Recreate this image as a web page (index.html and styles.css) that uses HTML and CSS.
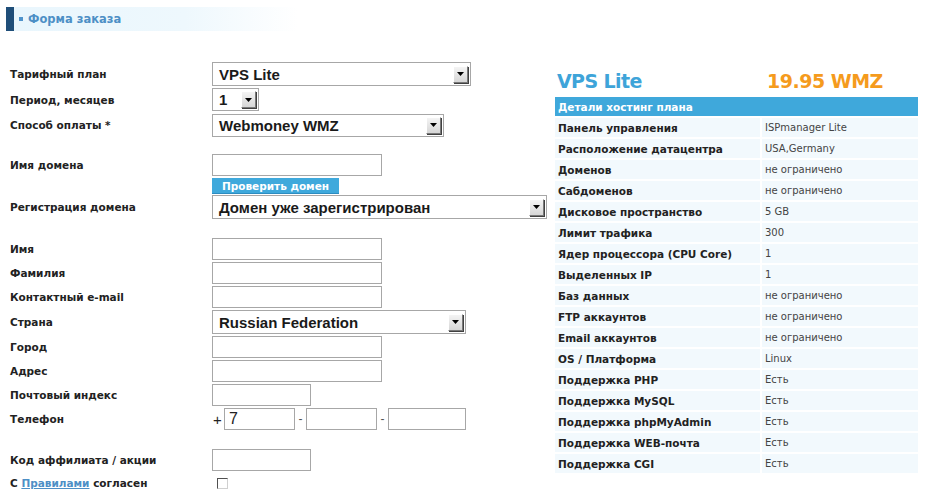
FILE: index.html
```html
<!DOCTYPE html>
<html lang="ru">
<head>
<meta charset="utf-8">
<title>Форма заказа</title>
<link rel="stylesheet" href="styles.css">
</head>
<body>
<div class="title-bar"><span class="bullet"></span><span class="title">Форма заказа</span></div>
<div class="content">
  <form class="form">
    <div class="row r26"><span class="lbl">Тарифный план</span>
      <div class="select w259"><span class="val">VPS Lite</span><span class="dd"><svg width="7" height="4" viewBox="0 0 7 4"><path d="M0 0H7L3.5 4Z" fill="#000"/></svg></span></div></div>
    <div class="row r25"><span class="lbl">Период, месяцев</span>
      <div class="select w47 h23"><span class="val">1</span><span class="dd"><svg width="7" height="4" viewBox="0 0 7 4"><path d="M0 0H7L3.5 4Z" fill="#000"/></svg></span></div></div>
    <div class="row r26"><span class="lbl">Способ оплаты *</span>
      <div class="select w232 h23"><span class="val">Webmoney WMZ</span><span class="dd"><svg width="7" height="4" viewBox="0 0 7 4"><path d="M0 0H7L3.5 4Z" fill="#000"/></svg></span></div></div>
    <div class="row r24 mt15"><span class="lbl">Имя домена</span><span class="input w170"></span></div>
    <div class="row r16 mt1"><span class="lbl"></span><span class="btn">Проверить домен</span></div>
    <div class="row r26"><span class="lbl">Регистрация домена</span>
      <div class="select w335"><span class="val">Домен уже зарегистрирован</span><span class="dd"><svg width="7" height="4" viewBox="0 0 7 4"><path d="M0 0H7L3.5 4Z" fill="#000"/></svg></span></div></div>
    <div class="row r24 mt17"><span class="lbl">Имя</span><span class="input w170"></span></div>
    <div class="row r24"><span class="lbl">Фамилия</span><span class="input w170"></span></div>
    <div class="row r24"><span class="lbl">Контактный e-mail</span><span class="input w170"></span></div>
    <div class="row r26"><span class="lbl">Страна</span>
      <div class="select w254"><span class="val">Russian Federation</span><span class="dd"><svg width="7" height="4" viewBox="0 0 7 4"><path d="M0 0H7L3.5 4Z" fill="#000"/></svg></span></div></div>
    <div class="row r24"><span class="lbl">Город</span><span class="input w170"></span></div>
    <div class="row r24"><span class="lbl">Адрес</span><span class="input w170"></span></div>
    <div class="row r24"><span class="lbl">Почтовый индекс</span><span class="input w99"></span></div>
    <div class="row r24"><span class="lbl">Телефон</span><span class="sep plus">+</span><span class="input w71"><span class="ival">7</span></span><span class="sep">-</span><span class="input w71"></span><span class="sep">-</span><span class="input w78"></span></div>
    <div class="row r24 mt17"><span class="lbl">Код аффилиата / акции</span><span class="input w99"></span></div>
    <div class="row r18 mt2"><span class="lbl">С <a href="#" class="link">Правилами</a> согласен</span><span class="check"></span></div>
  </form>
  <div class="plan">
    <div class="plan-head"><span class="plan-name">VPS Lite</span><span class="plan-price">19.95 WMZ</span></div>
    <table class="details">
      <tr><th colspan="2">Детали хостинг плана</th></tr>
      <tr><td class="k">Панель управления</td><td class="v">ISPmanager Lite</td></tr>
      <tr><td class="k">Расположение датацентра</td><td class="v">USA,Germany</td></tr>
      <tr><td class="k">Доменов</td><td class="v">не ограничено</td></tr>
      <tr><td class="k">Сабдоменов</td><td class="v">не ограничено</td></tr>
      <tr><td class="k">Дисковое пространство</td><td class="v">5 GB</td></tr>
      <tr><td class="k">Лимит трафика</td><td class="v">300</td></tr>
      <tr><td class="k">Ядер процессора (CPU Core)</td><td class="v">1</td></tr>
      <tr><td class="k">Выделенных IP</td><td class="v">1</td></tr>
      <tr><td class="k">Баз данных</td><td class="v">не ограничено</td></tr>
      <tr><td class="k">FTP аккаунтов</td><td class="v">не ограничено</td></tr>
      <tr><td class="k">Email аккаунтов</td><td class="v">не ограничено</td></tr>
      <tr><td class="k">OS / Платформа</td><td class="v">Linux</td></tr>
      <tr><td class="k">Поддержка PHP</td><td class="v">Есть</td></tr>
      <tr><td class="k">Поддержка MySQL</td><td class="v">Есть</td></tr>
      <tr><td class="k">Поддержка phpMyAdmin</td><td class="v">Есть</td></tr>
      <tr><td class="k">Поддержка WEB-почта</td><td class="v">Есть</td></tr>
      <tr><td class="k">Поддержка CGI</td><td class="v">Есть</td></tr>
    </table>
  </div>
</div>
</body>
</html>
```
FILE: styles.css
```css
html, body { margin: 0; padding: 0; background: #fff; }
body { font-family: "DejaVu Sans", Verdana, sans-serif; color: #222; }

.title-bar {
  margin: 7px 0 0 6px;
  width: 284px;
  height: 24px;
  border-left: 8px solid #1f4e79;
  background: linear-gradient(to right, #e9f6fd 0%, #eef8fd 60%, #ffffff 100%);
  display: flex;
  align-items: center;
}
.bullet { width: 4px; height: 4px; background: #4f93cb; margin: 0 5px 0 5px; }
.title { font-weight: bold; font-size: 11.5px; color: #4d8fc6; }

.content { display: flex; padding-left: 10px; margin-top: 30px; }

.form { width: 543px; flex: none; display: flex; flex-direction: column; }
.row { display: flex; align-items: center; }
.r26 { height: 26px; }
.r25 { height: 25px; }
.r24 { height: 24px; }
.r18 { height: 18px; }
.r16 { height: 16px; }
.mt15 { margin-top: 15px; }
.mt17 { margin-top: 17px; }
.mt1 { margin-top: 1px; }
.mt2 { margin-top: 2px; }

.lbl { width: 202px; flex: none; font-weight: bold; font-size: 10.5px; color: #222; }
.link { color: #4d8fc6; text-decoration: underline; }

.select {
  box-sizing: border-box;
  height: 24px;
  border: 1px solid #a7a7a7;
  display: flex;
  align-items: center;
  justify-content: space-between;
  padding: 0 2px 0 6px;
  background: #fff;
}
.select.h23 { height: 23px; }
.val { font-family: "Liberation Sans", Arial, sans-serif; font-weight: bold; font-size: 15px; color: #1a1a1a; white-space: nowrap; }
.dd {
  box-sizing: border-box;
  width: 15px;
  height: 17px;
  display: flex;
  align-items: center;
  justify-content: center;
  background: linear-gradient(#f4f4f4, #d6d6d6);
  border: 1px solid;
  border-color: #fff #7a7a7a #7a7a7a #fff;
  box-shadow: 1px 1px 0 #404040;
}
.w259 { width: 259px; }
.w47 { width: 47px; }
.w232 { width: 232px; }
.w335 { width: 335px; }
.w254 { width: 254px; }

.input {
  box-sizing: border-box;
  height: 22px;
  border: 1px solid #a7a7a7;
  background: #fff;
  display: flex;
  align-items: center;
  padding-left: 4px;
}
.w170 { width: 170px; }
.w99 { width: 99px; }
.w71 { width: 71px; }
.w78 { width: 78px; }
.ival { font-family: "Liberation Sans", Arial, sans-serif; font-size: 16px; color: #222; }
.sep { width: 11px; text-align: center; font-family: "Liberation Sans", Arial, sans-serif; font-size: 12px; color: #555; }
.sep.plus { width: 12px; text-align: left; padding-left: 1px; box-sizing: border-box; font-size: 15px; color: #222; }

.btn {
  box-sizing: border-box;
  width: 127px;
  height: 16px;
  background: #3fa9dc;
  color: #fff;
  font-weight: bold;
  font-size: 10.5px;
  display: flex;
  align-items: center;
  justify-content: center;
  border-bottom: 1px solid #2c8cc0;
}

.check {
  box-sizing: border-box;
  width: 11px;
  height: 11px;
  margin-left: 5px;
  border: 1px solid;
  border-color: #505050 #d0d0d0 #d0d0d0 #505050;
  background: #fff;
}

.plan { width: 367px; flex: none; }
.plan-head { display: flex; padding: 8px 0 0 4px; height: 24px; align-items: center; }
.plan-name { width: 210px; font-weight: bold; font-size: 19px; letter-spacing: -0.6px; color: #3ea4d9; }
.plan-price { font-weight: bold; font-size: 19px; letter-spacing: -0.5px; color: #f59b1d; }

.details { margin-top: 2px; width: 367px; border-collapse: separate; border-spacing: 2px; }
.details th {
  height: 19px; padding: 0 3px; text-align: left;
  background: #3fa8db; color: #fff; font-weight: bold; font-size: 10.5px;
}
.details td { height: 19px; padding: 0 3px; background: #f2f9fd; }
.details .k { width: 199px; font-weight: bold; font-size: 10.5px; color: #222; }
.details .v { font-size: 10px; color: #444; }
```
